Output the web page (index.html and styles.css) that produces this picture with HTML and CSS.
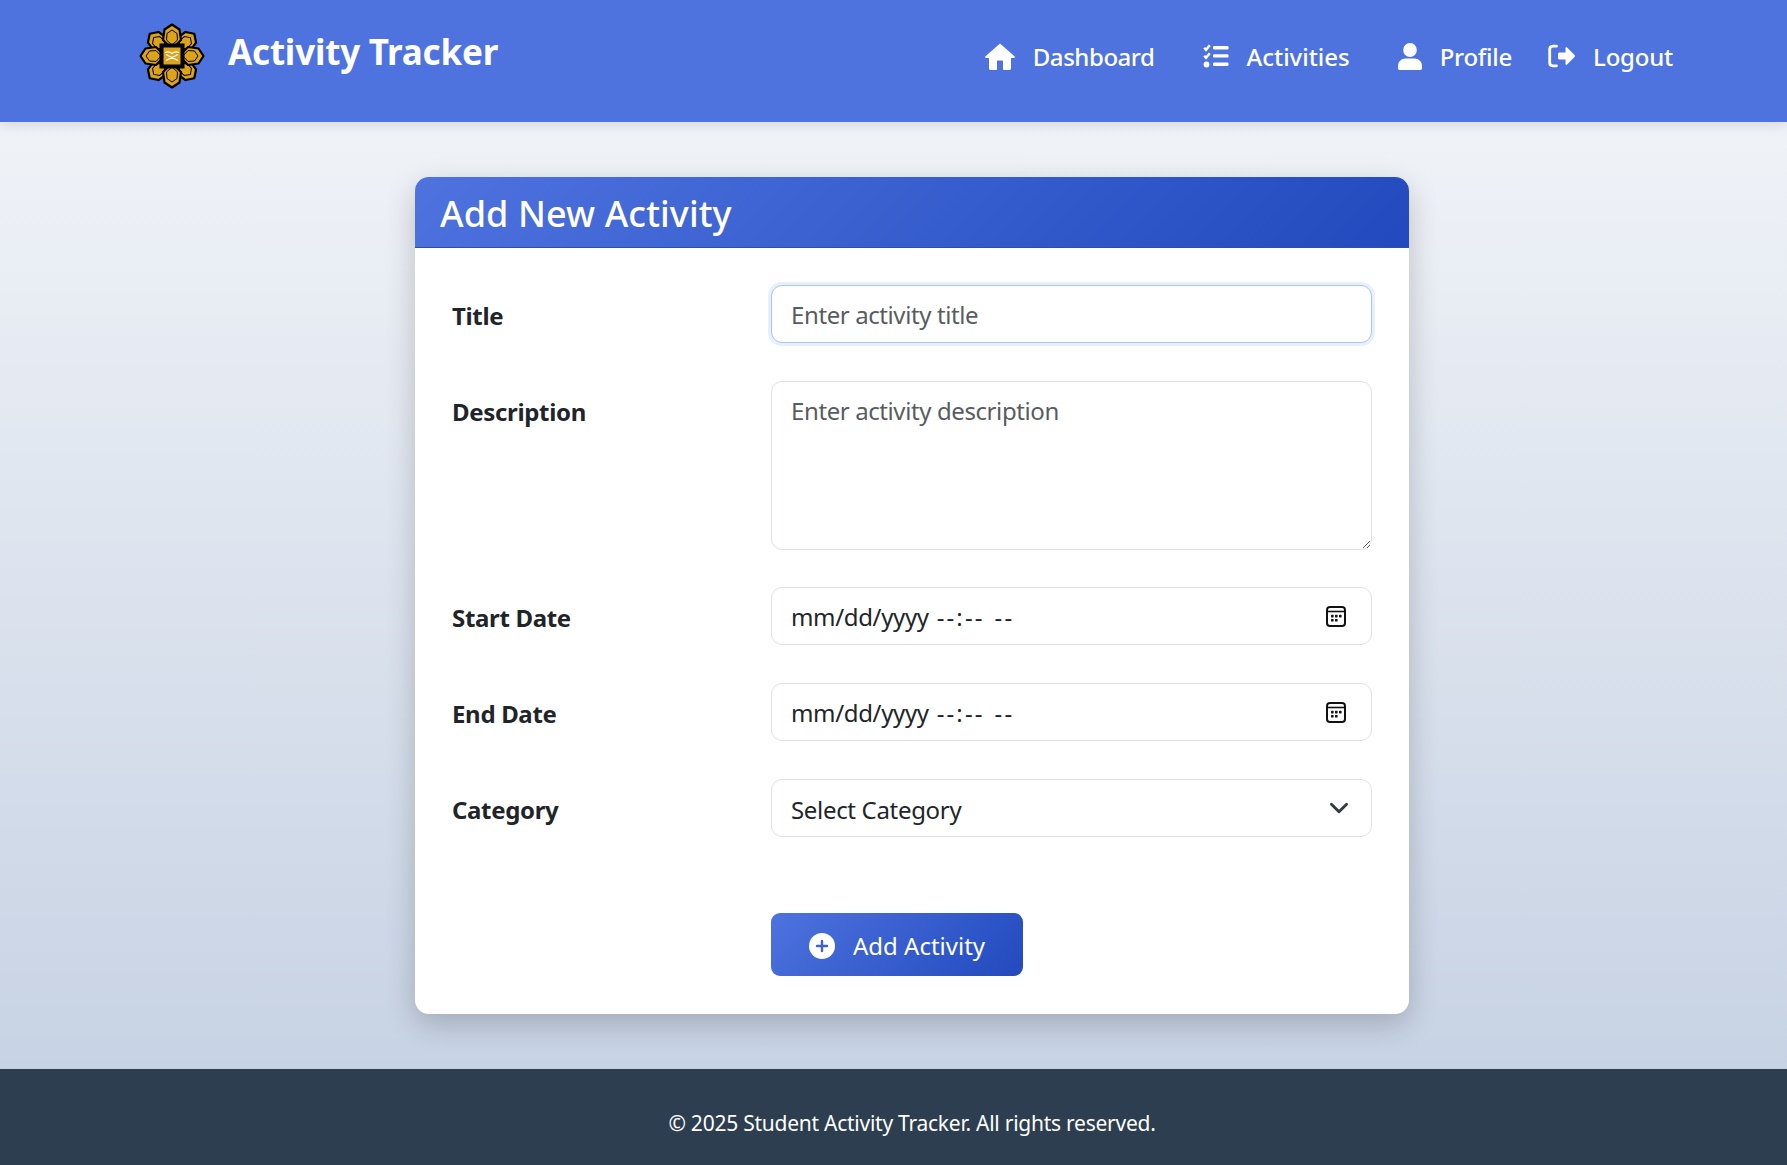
FILE: index.html
```html
<!DOCTYPE html>
<html lang="en">
<head>
<meta charset="utf-8">
<title>Add Activity</title>
<link rel="stylesheet" href="styles.css">
</head>
<body>
<header class="topbar">
  <a class="brand" href="#">
    <svg class="logo" viewBox="0 0 66 66" aria-hidden="true">
      <defs>
        <g id="petal">
          <path d="M33 1.500 40.500 6.500 42 17 33 26 24 17 25.500 6.500z" fill="#dba41a" stroke="#000" stroke-width="2.200" stroke-linejoin="round"/>
          <path d="M33 7 38 10.500 38.500 17 33 22 27.500 17 28 10.500z" fill="#dba41a" stroke="#000" stroke-width="1"/>
        </g>
      </defs>
      <use href="#petal" transform="rotate(45 33 33)"/>
      <use href="#petal" transform="rotate(135 33 33)"/>
      <use href="#petal" transform="rotate(225 33 33)"/>
      <use href="#petal" transform="rotate(315 33 33)"/>
      <use href="#petal"/>
      <use href="#petal" transform="rotate(90 33 33)"/>
      <use href="#petal" transform="rotate(180 33 33)"/>
      <use href="#petal" transform="rotate(270 33 33)"/>
      <rect x="22.500" y="22.500" width="21" height="21" fill="#dba41a" stroke="#000" stroke-width="4"/>
      <path d="M26 29.500q3.500-1.500 7 1q3.500-2.500 7-1M27 37.500l12-6M27 31.500l12 6" fill="none" stroke="#fff" stroke-width="1.200"/>
    </svg>
    <span class="brand-name">Activity Tracker</span>
  </a>
  <nav class="nav">
    <a class="nav-item" href="#">
      <svg class="nav-icon home" viewBox="0 0 30 27" aria-hidden="true"><path d="M15 0.500 29.500 13.200c.7.7.3 1.800-.7 1.800H26v10.500c0 .9-.7 1.500-1.500 1.500H19c-.6 0-1-.4-1-1v-7.500c0-.6-.4-1-1-1h-4c-.6 0-1 .4-1 1V26c0 .6-.4 1-1 1H5.500C4.700 27 4 26.400 4 25.500V15H1.200c-1 0-1.400-1.100-.7-1.800z"/></svg>
      <span class="nav-dashboard">Dashboard</span>
    </a>
    <a class="nav-item" href="#">
      <svg class="nav-icon list" viewBox="0 0 26 24" aria-hidden="true"><path d="M1.200 3.800 3 5.800 6.800 1.200M1.200 11.800 3 13.800 6.800 9.200" fill="none" stroke="#fff" stroke-width="2.400"/><circle cx="3.500" cy="20.500" r="2.900"/><rect x="10" y="2" width="15.500" height="3.400" rx="1.200"/><rect x="10" y="10.200" width="15.500" height="3.400" rx="1.200"/><rect x="10" y="18.600" width="15.500" height="3.400" rx="1.200"/></svg>
      <span class="nav-activities">Activities</span>
    </a>
    <a class="nav-item" href="#">
      <svg class="nav-icon user" viewBox="0 0 24 27" aria-hidden="true"><ellipse cx="12" cy="7" rx="6.800" ry="7"/><path d="M7.500 15.500h9c4.200 0 7.500 3.300 7.500 7.500v2.200c0 1-.8 1.800-1.800 1.800H1.800C.8 27 0 26.200 0 25.200V23c0-4.200 3.300-7.500 7.500-7.500z"/></svg>
      <span class="nav-profile">Profile</span>
    </a>
    <a class="nav-item logout" href="#">
      <svg class="nav-icon out" viewBox="0 0 27 24" aria-hidden="true"><path d="M8.500 2.200H5C3 2.200 1.700 3.500 1.700 5.500v13c0 2 1.300 3.300 3.300 3.300h3.500" fill="none" stroke="#fff" stroke-width="2.800" stroke-linecap="round"/><path d="M17.500 4.200c0-.9 1-1.300 1.600-.7l7.400 7.600c.6.600.6 1.300 0 1.900l-7.400 7.500c-.6.600-1.600.2-1.600-.7V15.500h-6c-.8 0-1.500-.7-1.500-1.500v-4c0-.8.7-1.500 1.500-1.500h6z"/></svg>
      <span class="nav-logout">Logout</span>
    </a>
  </nav>
</header>

<main class="page">
  <section class="card">
    <h1 class="card-title">Add New Activity</h1>
    <form class="form">
      <div class="row">
        <label class="label" for="title">Title</label>
        <input class="field focused" id="title" type="text" placeholder="Enter activity title">
      </div>
      <div class="row">
        <label class="label" for="description">Description</label>
        <textarea class="field area" id="description" placeholder="Enter activity description"></textarea>
      </div>
      <div class="row">
        <span class="label">Start Date</span>
        <div class="field date" tabindex="0">
          <span>mm/dd/yyyy</span><span class="dashes">--:--</span><span class="dashes">--</span>
          <svg class="cal" viewBox="0 0 20 21" aria-hidden="true"><rect x="1" y="1" width="18" height="19" rx="3" fill="none" stroke="#111" stroke-width="2"/><path d="M1 5.500h18" stroke="#111" stroke-width="1.600"/><g fill="#111"><rect x="5" y="8.800" width="2.600" height="2.600" rx=".6"/><rect x="9" y="8.800" width="2.600" height="2.600" rx=".6"/><rect x="13" y="8.800" width="2.600" height="2.600" rx=".6"/><rect x="5" y="13" width="2.600" height="2.600" rx=".6"/><rect x="9" y="13" width="2.600" height="2.600" rx=".6"/></g></svg>
        </div>
      </div>
      <div class="row">
        <span class="label">End Date</span>
        <div class="field date" tabindex="0">
          <span>mm/dd/yyyy</span><span class="dashes">--:--</span><span class="dashes">--</span>
          <svg class="cal" viewBox="0 0 20 21" aria-hidden="true"><rect x="1" y="1" width="18" height="19" rx="3" fill="none" stroke="#111" stroke-width="2"/><path d="M1 5.500h18" stroke="#111" stroke-width="1.600"/><g fill="#111"><rect x="5" y="8.800" width="2.600" height="2.600" rx=".6"/><rect x="9" y="8.800" width="2.600" height="2.600" rx=".6"/><rect x="13" y="8.800" width="2.600" height="2.600" rx=".6"/><rect x="5" y="13" width="2.600" height="2.600" rx=".6"/><rect x="9" y="13" width="2.600" height="2.600" rx=".6"/></g></svg>
        </div>
      </div>
      <div class="row">
        <label class="label" for="category">Category</label>
        <select class="field picker" id="category"><option>Select Category</option></select>
      </div>
      <div class="actions">
        <button class="submit" type="button">
          <svg class="plus" viewBox="0 0 26 26" aria-hidden="true"><circle cx="13" cy="13" r="13" fill="#fff"/><path d="M13 8v10M8 13h10" stroke="#3f62cf" stroke-width="2.400" stroke-linecap="round"/></svg>
          <span>Add Activity</span>
        </button>
      </div>
    </form>
  </section>
</main>

<footer class="footer">© 2025 Student Activity Tracker. All rights reserved.</footer>
</body>
</html>
```
FILE: styles.css
```css
* { box-sizing: border-box; }
html, body { height: 100%; }
body {
  margin: 0;
  min-height: 100vh;
  display: flex;
  flex-direction: column;
  font-family: "Noto Sans", "Open Sans", sans-serif;
  color: #212529;
  background: linear-gradient(180deg, #f5f7fa 0%, #c3cfe2 100%);
}
a { color: inherit; text-decoration: none; }

.topbar {
  height: 122px;
  flex: none;
  display: flex;
  justify-content: space-between;
  align-items: flex-start;
  padding: 0 114px 0 139px;
  background: #4e73df;
  color: #fff;
  box-shadow: 0 4px 12px rgba(0, 0, 0, 0.1);
}
.brand { display: flex; align-items: center; gap: 23px; margin-top: 23px; }
.logo { width: 66px; height: 66px; flex: none; }
.brand-name { font-size: 35px; font-weight: 700; line-height: 1; position: relative; top: -5px; letter-spacing: -0.2px; }

.nav { display: flex; align-items: center; gap: 48px; height: 112px; }
.nav-item { display: flex; align-items: center; gap: 18px; font-size: 24px; font-weight: 500; }
.nav-dashboard { letter-spacing: -0.45px; }
.nav-activities { letter-spacing: -0.03px; }
.nav-profile { letter-spacing: -0.27px; }
.nav-logout { letter-spacing: -0.22px; }
.logout { margin-left: -12px; }
.nav-icon { fill: #fff; flex: none; display: block; }
.home { width: 30px; height: 27px; }
.list { width: 26px; height: 24px; }
.user { width: 24px; height: 27px; }
.out { width: 27px; height: 24px; }

.page { flex: 1; display: flex; justify-content: center; align-items: flex-start; padding-top: 55px; padding-left: 37px; }
.card {
  width: 994px;
  background: #fff;
  border-radius: 14px;
  overflow: hidden;
  box-shadow: 0 10px 30px rgba(0, 0, 0, 0.2);
}
.card-title {
  margin: 0;
  height: 71px;
  padding: 2px 25px 0;
  display: flex;
  align-items: center;
  font-size: 36px;
  font-weight: 500;
  color: #fff;
  letter-spacing: 0.1px;
  background: linear-gradient(135deg, #4e73df 0%, #224abe 100%);
  border-bottom: 1px solid #2a4fb4;
}
.form { padding: 37px 37px 38px; display: flex; flex-direction: column; gap: 38px; }
.row { display: grid; grid-template-columns: 319px 1fr; align-items: start; }
.label { height: 58px; font-size: 24px; font-weight: 700; line-height: 62px; letter-spacing: -0.33px; color: #212529; }
.field {
  display: block;
  width: 100%;
  height: 58px;
  margin: 0;
  padding: 0 19px;
  font: 400 24px "Noto Sans", "Open Sans", sans-serif;
  letter-spacing: -0.4px;
  color: #212529;
  background-color: #fff;
  border: 1px solid #dee2e6;
  border-radius: 11px;
  outline: none;
}
.field::placeholder { color: #595c5f; opacity: 1; }
.focused { border-color: #a9c4ef; box-shadow: 0 0 0 3px rgba(13, 110, 253, 0.1); }
.area { height: 169px; margin-bottom: -1px; padding-top: 12px; resize: vertical; }
.date { display: flex; align-items: center; gap: 8px; letter-spacing: -0.35px; padding-top: 1px; }
.dashes { letter-spacing: 2.1px; margin-right: 2px; }
.cal { width: 20px; height: 21px; margin-left: auto; margin-right: 6px; margin-top: -1px; }
.picker {
  appearance: none;
  padding-top: 2px;
  letter-spacing: -0.32px;
  background-image: url("data:image/svg+xml,%3Csvg xmlns='http://www.w3.org/2000/svg' viewBox='0 0 18 12'%3E%3Cpath d='M2 2l7 7 7-7' fill='none' stroke='%23343a40' stroke-width='2.600' stroke-linecap='round' stroke-linejoin='round'/%3E%3C/svg%3E");
  background-repeat: no-repeat;
  background-position: right 22px center;
  background-size: 20px 13px;
}
.actions { padding-left: 319px; margin-top: 38px; }
.submit {
  display: inline-flex;
  align-items: center;
  gap: 18px;
  width: 252px;
  height: 63px;
  padding: 2px 0 0 38px;
  border: 0;
  border-radius: 9px;
  color: #fff;
  font: 400 24px "Noto Sans", "Open Sans", sans-serif;
  letter-spacing: 0;
  background: linear-gradient(135deg, #4e73df 0%, #224abe 100%);
}
.plus { width: 26px; height: 26px; flex: none; }
.footer {
  flex: none;
  height: 96px;
  display: flex;
  align-items: center;
  justify-content: center;
  padding: 12px 0 0 37px;
  background: #2c3e50;
  color: #fff;
  font-size: 21px;
  letter-spacing: -0.25px;
}
```
